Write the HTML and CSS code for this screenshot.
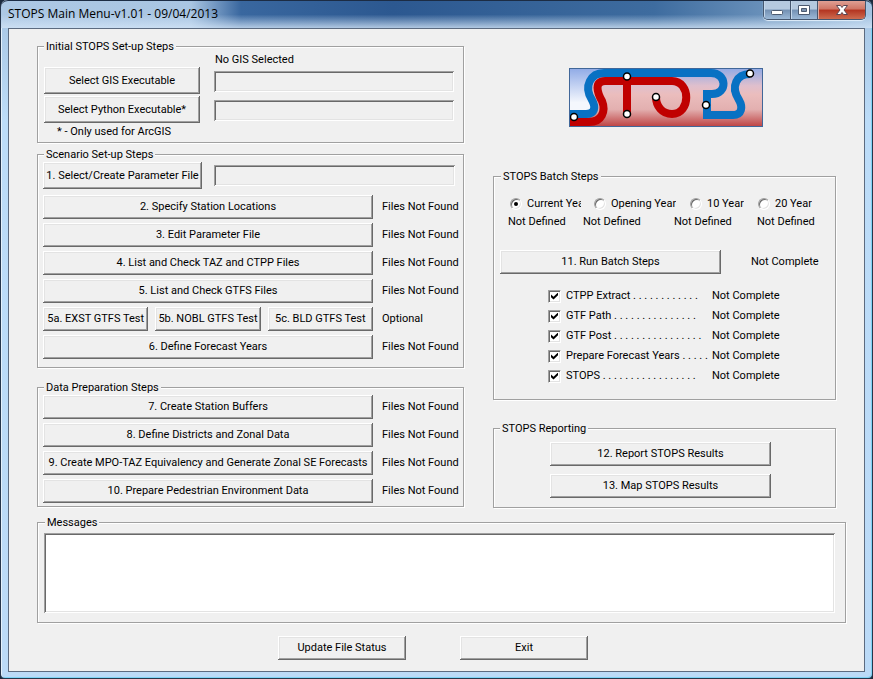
FILE: index.html
```html
<!DOCTYPE html>
<html lang="en">
<head>
<meta charset="utf-8">
<title>STOPS Main Menu-v1.01 - 09/04/2013</title>
<link rel="stylesheet" href="styles.css">
</head>
<body>
<div class="window">
  <header class="titlebar">
    <h1 class="title">STOPS Main Menu-v1.01 - 09/04/2013</h1>
    <div class="caption-buttons">
      <button class="caption" type="button" aria-label="Minimize">
        <svg width="14" height="14" viewBox="0 0 14 14"><rect x="1.500" y="7.500" width="11" height="4" rx="1" fill="#fff" stroke="#4c5a70"/></svg>
      </button>
      <button class="caption" type="button" aria-label="Maximize">
        <svg width="14" height="14" viewBox="0 0 14 14"><path d="M1.500 2.500h11v9h-11z" fill="#fff" stroke="#4c5a70"/><path d="M4.500 5.500h5v3h-5z" fill="#7d93af" stroke="#4c5a70"/></svg>
      </button>
      <button class="caption caption-close" type="button" aria-label="Close">
        <svg width="14" height="14" viewBox="0 0 14 14"><path d="M1.500 2.500h4l1.500 2 1.500-2h4l-3.500 4.500 3.500 4.500h-4l-1.500-2-1.500 2h-4l3.500-4.500z" fill="#fff" stroke="#5b4550"/></svg>
      </button>
    </div>
  </header>

  <main class="client">
    <div class="columns">
      <div class="column">
        <fieldset class="group">
          <legend>Initial STOPS Set-up Steps</legend>
          <div class="setup">
            <label class="setup-status" for="gis">No GIS Selected</label>
            <button class="btn btn-tall" type="button">Select GIS Executable</button>
            <input class="field" id="gis" type="text" readonly>
            <button class="btn btn-tall" type="button">Select Python Executable*</button>
            <input class="field" type="text" aria-label="Python executable" readonly>
            <p class="note">* - Only used for ArcGIS</p>
          </div>
        </fieldset>

        <fieldset class="group group-scenario">
          <legend>Scenario Set-up Steps</legend>
          <div class="parameter">
            <button class="btn btn-tall" type="button">1. Select/Create Parameter File</button>
            <input class="field" type="text" aria-label="Parameter file" readonly>
          </div>
          <div class="steps">
            <button class="btn" type="button">2. Specify Station Locations</button><span>Files Not Found</span>
            <button class="btn" type="button">3. Edit Parameter File</button><span>Files Not Found</span>
            <button class="btn" type="button">4. List and Check TAZ and CTPP Files</button><span>Files Not Found</span>
            <button class="btn" type="button">5. List and Check GTFS Files</button><span>Files Not Found</span>
            <div class="tests">
              <button class="btn" type="button">5a. EXST GTFS Test</button>
              <button class="btn" type="button">5b. NOBL GTFS Test</button>
              <button class="btn" type="button">5c. BLD GTFS Test</button>
            </div><span>Optional</span>
            <button class="btn" type="button">6. Define Forecast Years</button><span>Files Not Found</span>
          </div>
        </fieldset>

        <fieldset class="group group-data">
          <legend>Data Preparation Steps</legend>
          <div class="steps">
            <button class="btn" type="button">7. Create Station Buffers</button><span>Files Not Found</span>
            <button class="btn" type="button">8. Define Districts and Zonal Data</button><span>Files Not Found</span>
            <button class="btn" type="button">9. Create MPO-TAZ Equivalency and Generate Zonal SE Forecasts</button><span>Files Not Found</span>
            <button class="btn" type="button">10. Prepare Pedestrian Environment Data</button><span>Files Not Found</span>
          </div>
        </fieldset>
      </div>

      <div class="column column-right">
        <svg class="logo" width="194" height="59" viewBox="0 0 194 59" role="img" aria-label="STOPS">
          <defs>
            <linearGradient id="rose" x1="0" y1="0" x2="0" y2="1">
              <stop offset="0" stop-color="#8faae6"/><stop offset=".3" stop-color="#dfbfcd"/><stop offset=".45" stop-color="#ebbdbd"/><stop offset=".7" stop-color="#e3b0b0"/><stop offset="1" stop-color="#bd4040"/>
            </linearGradient>
            <linearGradient id="sky" x1="0" y1="0" x2="0" y2="1">
              <stop offset="0" stop-color="#8faae6"/><stop offset=".75" stop-color="#f4f7fd"/>
            </linearGradient>
          </defs>
          <rect width="194" height="59" fill="url(#rose)"/>
          <path d="M0 0H32Q20 8 20 18Q27 32 25 42L18 46H0z" fill="url(#sky)"/>
          <g fill="none" stroke-width="8">
            <path d="M0 46H17C26 46 27 39 23 32C14 18 22 5 35 5H142C158 5 159 26 143 26H138V47H164C173 47 174 39 170 32C161 18 168 6 181 6" stroke="#0871c3"/>
            <path d="M0 54H20C33 54 37 43 33 33C28 24 25 13 36 13H103C122 13 122 46 103 46C93 46 87 38 87 29M58 10V46" stroke="#c00000"/>
          </g>
          <g fill="#fff" stroke="#000" stroke-width="1.500">
            <circle cx="5" cy="49" r="3.500"/><circle cx="58" cy="8.500" r="3.500"/><circle cx="58" cy="46" r="3.500"/><circle cx="87" cy="29" r="3.500"/><circle cx="137" cy="37" r="3.500"/><circle cx="181" cy="5.500" r="3.500"/>
          </g>
          <rect x=".5" y=".5" width="193" height="58" fill="none" stroke="#416799"/>
        </svg>

        <fieldset class="group group-batch">
          <legend>STOPS Batch Steps</legend>
          <div class="years">
            <label class="year year-current"><input type="radio" name="year" checked><span>Current Year</span></label>
            <label class="year"><input type="radio" name="year"><span>Opening Year</span></label>
            <label class="year year-ten"><input type="radio" name="year"><span>10 Year</span></label>
            <label class="year"><input type="radio" name="year"><span>20 Year</span></label>
          </div>
          <div class="year-status">
            <span>Not Defined</span><span>Not Defined</span><span>Not Defined</span><span>Not Defined</span>
          </div>
          <div class="run">
            <button class="btn" type="button">11. Run Batch Steps</button><span>Not Complete</span>
          </div>
          <div class="checks">
            <label><input type="checkbox" checked>CTPP Extract . . . . . . . . . . . .</label><span>Not Complete</span>
            <label><input type="checkbox" checked>GTF Path . . . . . . . . . . . . . . .</label><span>Not Complete</span>
            <label><input type="checkbox" checked>GTF Post . . . . . . . . . . . . . . . .</label><span>Not Complete</span>
            <label><input type="checkbox" checked>Prepare Forecast Years . . . . .</label><span>Not Complete</span>
            <label><input type="checkbox" checked>STOPS . . . . . . . . . . . . . . . . .</label><span>Not Complete</span>
          </div>
        </fieldset>

        <fieldset class="group group-report">
          <legend>STOPS Reporting</legend>
          <div class="reports">
            <button class="btn" type="button">12. Report STOPS Results</button>
            <button class="btn" type="button">13. Map STOPS Results</button>
          </div>
        </fieldset>
      </div>
    </div>

    <fieldset class="group group-messages">
      <legend>Messages</legend>
      <textarea class="messages" aria-label="Messages" readonly></textarea>
    </fieldset>

    <div class="actions">
      <button class="btn" type="button">Update File Status</button>
      <button class="btn" type="button">Exit</button>
    </div>
  </main>
</div>
</body>
</html>
```
FILE: styles.css
```css
* {
  box-sizing: border-box;
}

body {
  margin: 0;
  background: #1d2a3d;
  color: #000;
  font: 11px/14px Roboto, "Liberation Sans", sans-serif;
}

button,
input,
textarea {
  margin: 0;
  font: inherit;
  color: inherit;
}

.window {
  display: flex;
  flex-direction: column;
  min-height: 100vh;
  padding: 0 7px 6px;
  border: 1px solid #26364c;
  border-top: 0;
  border-radius: 7px 7px 5px 5px;
  background: linear-gradient(#a6c4e2 0, #bcdcf8 120px, #bbdaf7 100%);
  box-shadow: inset 1px 1px #e4f1fc, inset -1px -1px #7fd3f5;
}

/* Title bar */

.titlebar {
  display: flex;
  justify-content: space-between;
  align-items: flex-start;
  height: 28px;
  margin: 0 -7px;
  padding: 0 6px 0 7px;
  border-top: 1px solid #1c2c44;
  border-radius: 7px 7px 0 0;
  background:
    linear-gradient(rgb(255 255 255 / 0) 50%, rgb(210 228 246 / 80%)),
    linear-gradient(90deg, #adc8e4 0, #a9c5e2 190px, #39679f 240px, #2c5890 45%, #3e6c9f 75%, #7197bf 90%, #a5c4e2);
}

.title {
  margin: 5px 0 0;
  font: 12px/16px "Open Sans", "Noto Sans", sans-serif;
}

.caption-buttons {
  display: flex;
  height: 19px;
  border: 1px solid #46576f;
  border-top: 0;
  border-radius: 0 0 5px 5px;
  box-shadow: 0 1px 1px #e2effb;
  overflow: hidden;
}

.caption {
  display: grid;
  place-items: center;
  width: 27px;
  padding: 0;
  border: 0;
  border-right: 1px solid #46576f;
  background: linear-gradient(#b5c9df 0 45%, #7390b3 50%, #9cb9d7);
  box-shadow: inset 1px 0 #c5d8eb;
}

.caption-close {
  width: 47px;
  border-right: 0;
  background: linear-gradient(#dfa094 0, #cf7464 45%, #b33420 50%, #cd6c50);
  box-shadow: inset 1px 0 #e0aaa0;
}

/* Client area */

.client {
  flex: 1;
  padding: 11px 18px 10px 28px;
  border: 1px solid #5c6b80;
  background: #f0f0f0;
}

.columns {
  display: grid;
  grid-template-columns: 427fr 353fr;
  gap: 29px;
}

.column {
  display: flex;
  flex-direction: column;
  min-width: 0;
}

.column-right {
  margin-right: 10px;
}

.group {
  min-width: 0;
  margin: 0;
  padding: 0 5px;
  border: 1px solid #a0a0a0;
  box-shadow: 1px 1px #fff, inset 1px 1px #fff;
}

.group legend {
  margin-left: 1px;
  padding: 0 2px;
  background: #f0f0f0;
  line-height: 13px;
}

.group-scenario {
  margin-top: 5px;
  padding-bottom: 8px;
}

.group-data {
  margin-top: 13px;
  padding-top: 1px;
  padding-bottom: 3px;
}

.btn {
  min-width: 0;
  height: 24px;
  padding: 0;
  border: 0;
  background: #f0f0f0;
  box-shadow: inset -1px -1px #696969, inset 1px 1px #fff, inset -2px -2px #a0a0a0, inset 2px 2px #e3e3e3;
  text-align: center;
  white-space: nowrap;
  overflow: hidden;
}

.btn-tall {
  height: 27px;
}

.field {
  width: 100%;
  min-width: 0;
  height: 21px;
  padding: 0 4px;
  border: 0;
  background: #f0f0f0;
  box-shadow: inset 1px 1px #a0a0a0, inset -1px -1px #fff, inset 2px 2px #696969, inset -2px -2px #e3e3e3;
}

.setup {
  display: grid;
  grid-template-columns: 156px 1fr;
  column-gap: 14px;
  align-items: center;
  padding: 0 4px 3px 1px;
}

.setup .btn {
  margin-bottom: 2px;
}

.setup-status {
  grid-column: 2;
  padding-left: 1px;
}

.note {
  grid-column: 1;
  margin: 0;
  padding-left: 13px;
}

.parameter {
  display: grid;
  grid-template-columns: 159px 1fr;
  gap: 12px;
  align-items: center;
  margin-bottom: 6px;
  padding: 1px 3px 0 0;
}

.steps {
  display: grid;
  grid-template-columns: 1fr 76px;
  gap: 4px 9px;
  align-items: center;
  white-space: nowrap;
}

.tests {
  display: grid;
  grid-template-columns: repeat(3, 1fr);
  gap: 7px;
}

/* Batch column */

.logo {
  align-self: center;
  margin: 28px 0 43px 2px;
}

.group-batch {
  padding: 0 6px 16px;
}

.years {
  display: grid;
  grid-template-columns: 84px 96px 68px 1fr;
  padding: 14px 0 0 10px;
}

.year {
  display: flex;
  gap: 5px;
  align-items: center;
  white-space: nowrap;
}

.year span {
  overflow: hidden;
}

.year-current span {
  width: 54px;
}

.year-ten span {
  width: 37px;
}

.year-status {
  display: grid;
  grid-template-columns: 75px 91px 83px 1fr;
  padding: 4px 0 0 8px;
}

.run {
  display: grid;
  grid-template-columns: 221px 1fr;
  gap: 30px;
  align-items: center;
  margin: 21px 0 15px;
}

.checks {
  display: grid;
  grid-template-columns: 158px 1fr;
  gap: 6px;
  padding-left: 48px;
}

.checks label {
  display: flex;
  gap: 5px;
  align-items: center;
  white-space: nowrap;
}

input[type="radio"],
input[type="checkbox"] {
  display: grid;
  place-items: center;
  flex: none;
  appearance: none;
  width: 12px;
  height: 12px;
  border: 1px solid;
  border-color: #a0a0a0 #fff #fff #a0a0a0;
  background: #fff;
  box-shadow: inset 1px 1px #696969, inset -1px -1px #e3e3e3;
}

input[type="checkbox"] {
  width: 13px;
  height: 13px;
}

input[type="radio"] {
  border-radius: 50%;
}

input[type="radio"]:checked::before {
  content: "";
  width: 4px;
  height: 4px;
  border-radius: 50%;
  background: #000;
}

input[type="checkbox"]:checked::before {
  content: "";
  width: 7px;
  height: 7px;
  background: #000;
  clip-path: polygon(0 28%, 36% 62%, 100% 0, 100% 38%, 36% 100%, 0 68%);
}

.group-report {
  margin-top: 22px;
  padding-bottom: 9px;
}

.reports {
  display: grid;
  grid-template-columns: 221px;
  gap: 8px;
  justify-content: center;
  padding: 7px 8px 0 0;
}

/* Messages and footer */

.group-messages {
  margin-top: 8px;
  padding: 4px 10px 9px 6px;
}

.messages {
  display: block;
  width: 100%;
  height: 80px;
  padding: 4px;
  border: 0;
  background: #fff;
  box-shadow: inset 1px 1px #a0a0a0, inset -1px -1px #fff, inset 2px 2px #696969, inset -2px -2px #e3e3e3;
  resize: none;
}

.actions {
  display: grid;
  grid-template-columns: 128px 128px;
  gap: 54px;
  justify-content: center;
  margin-top: 13px;
  padding-right: 17px;
}
```
